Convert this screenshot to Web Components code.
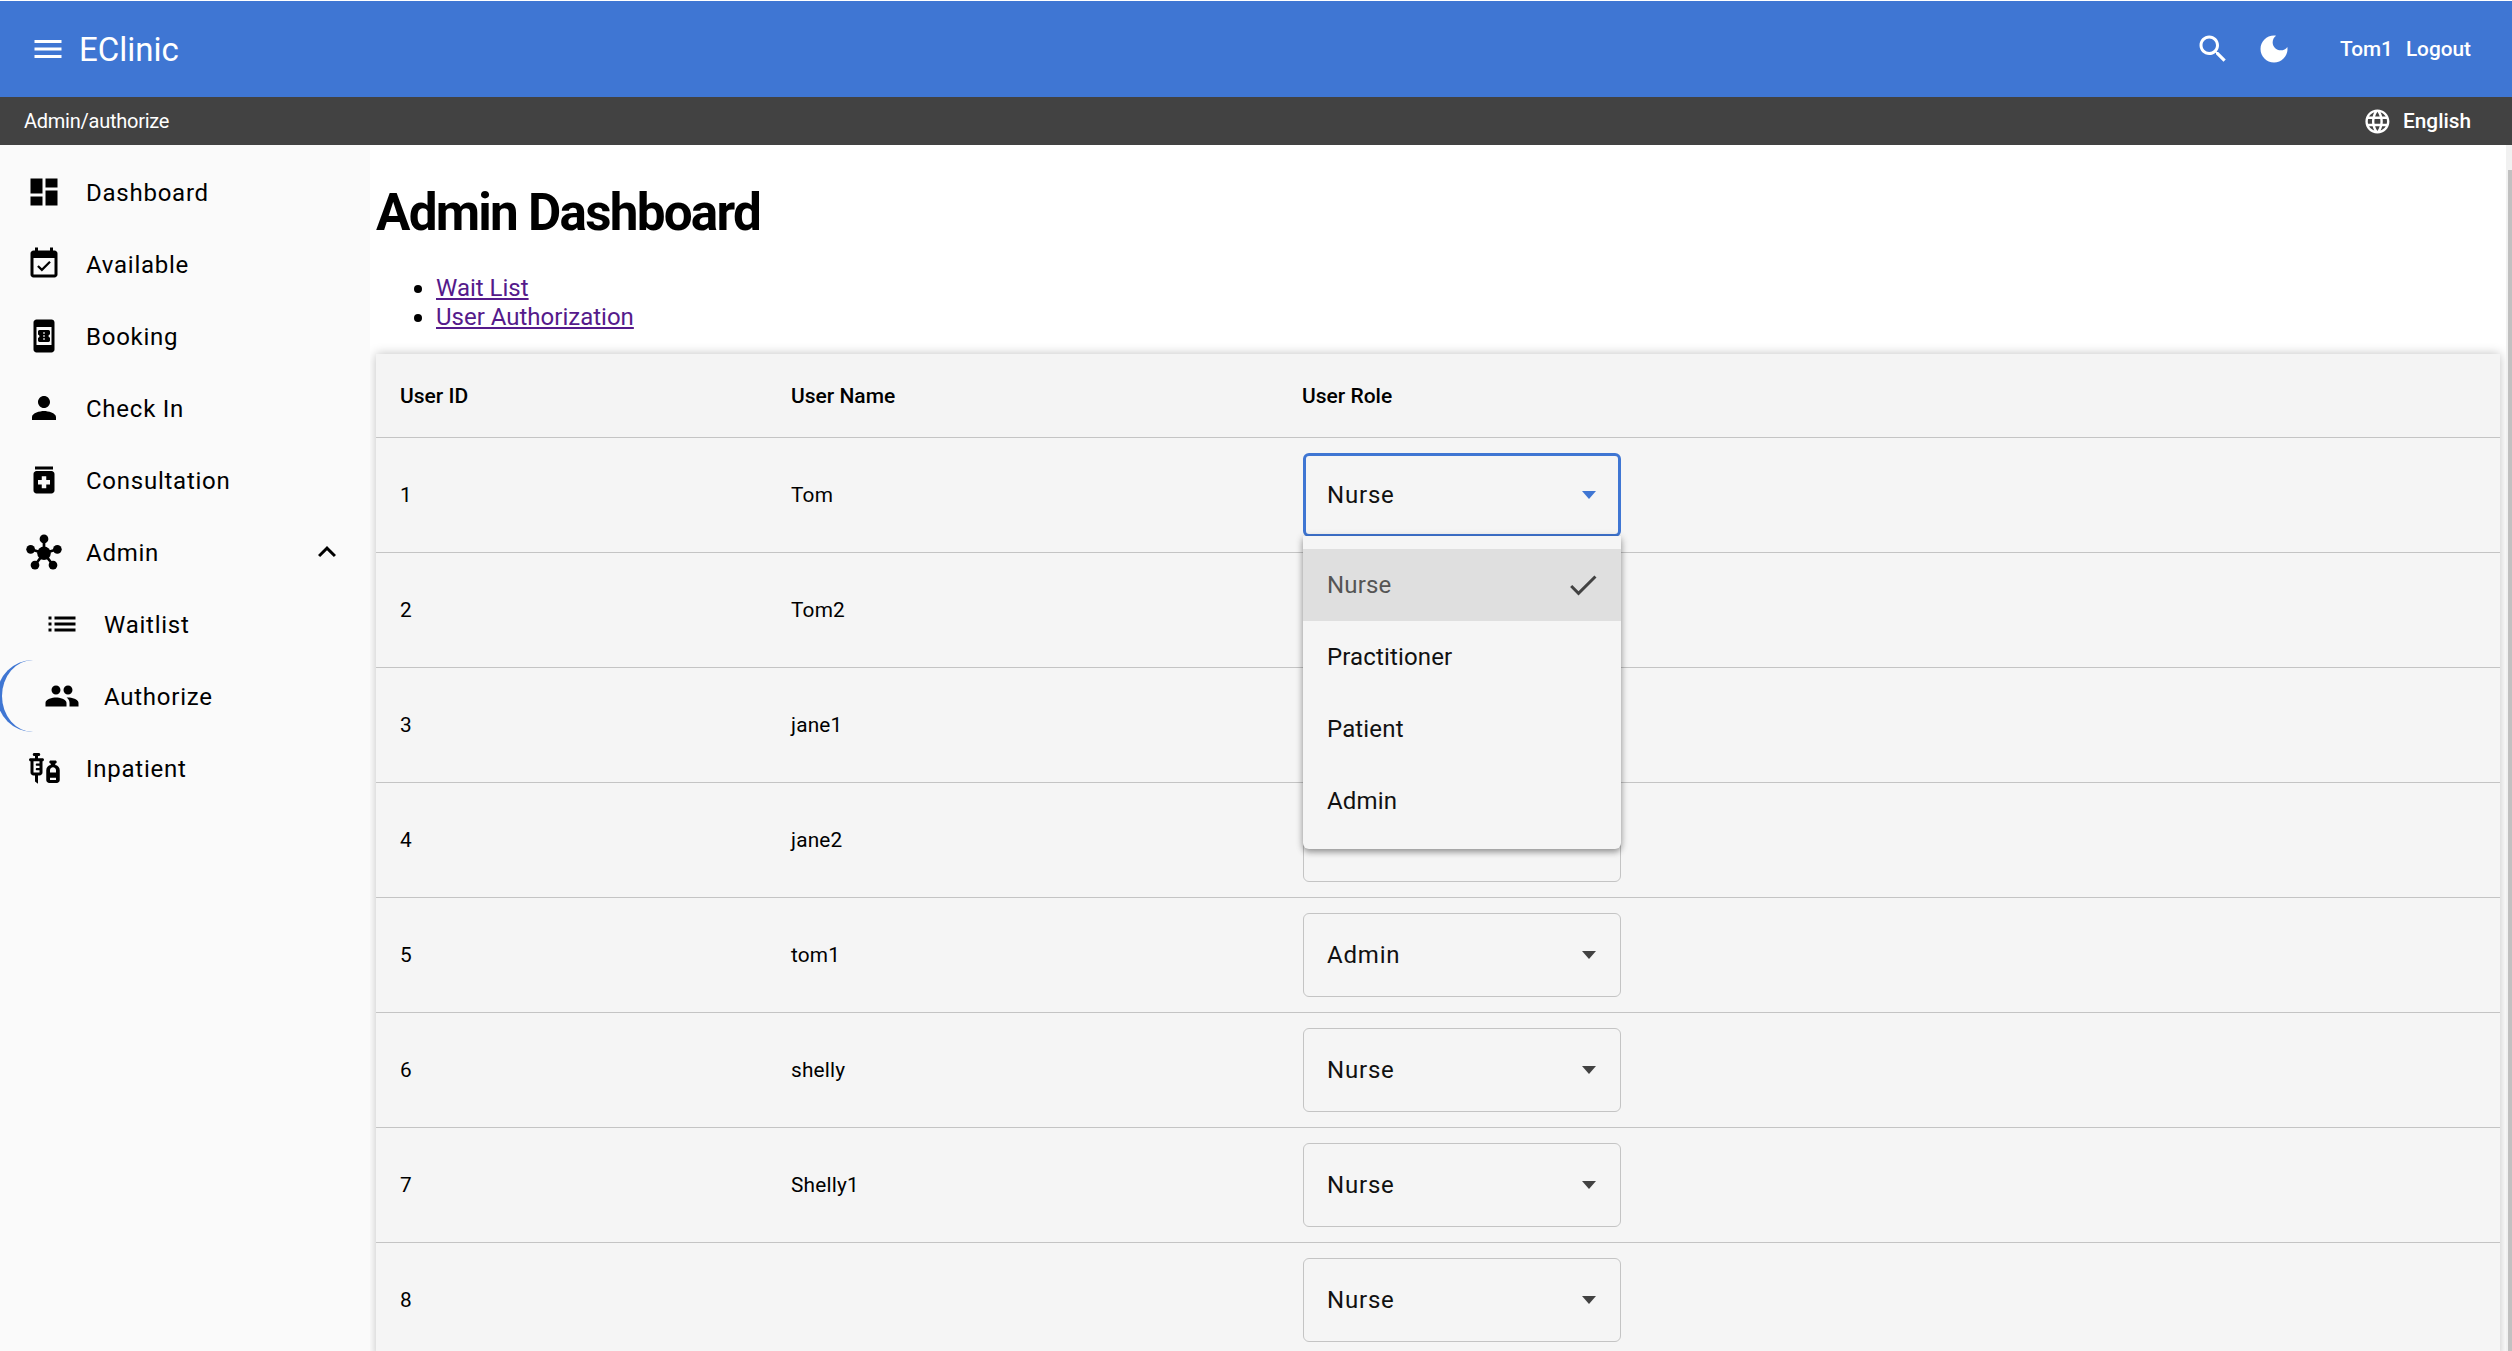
<!DOCTYPE html>
<html lang="en"><head><meta charset="utf-8"><title>EClinic</title>
<style>
html,body{margin:0;height:100%;overflow:hidden;background:#fff;font-family:Roboto,"Liberation Sans",sans-serif}
</style></head><body>
<app-shell>
  <app-topbar slot="top"></app-topbar>
  <app-subbar slot="top"></app-subbar>
  <app-sidebar slot="side">
    <nav-item icon="dashboard">Dashboard</nav-item>
    <nav-item icon="event">Available</nav-item>
    <nav-item icon="book">Booking</nav-item>
    <nav-item icon="person">Check In</nav-item>
    <nav-item icon="medication">Consultation</nav-item>
    <nav-item icon="hub" expanded>Admin</nav-item>
    <nav-item icon="list" sub>Waitlist</nav-item>
    <nav-item icon="people" sub active>Authorize</nav-item>
    <nav-item icon="vaccines">Inpatient</nav-item>
  </app-sidebar>
  <admin-page slot="main">
    <user-table>
      <user-row uid="1" name="Tom" role="Nurse" open></user-row>
      <user-row uid="2" name="Tom2"></user-row>
      <user-row uid="3" name="jane1"></user-row>
      <user-row uid="4" name="jane2"></user-row>
      <user-row uid="5" name="tom1" role="Admin"></user-row>
      <user-row uid="6" name="shelly" role="Nurse"></user-row>
      <user-row uid="7" name="Shelly1" role="Nurse"></user-row>
      <user-row uid="8" name="" role="Nurse"></user-row>
    </user-table>
  </admin-page>
</app-shell>
<script>
const ICONS={
menu:'<path d="M3 18h18v-2H3v2zm0-5h18v-2H3v2zm0-7v2h18V6H3z"/>',
dashboard:'<path d="M3 13h8V3H3v10zm0 8h8v-6H3v6zm10 0h8V11h-8v10zm0-18v6h8V3h-8z"/>',
event:'<path d="M16.53 11.06L15.47 10l-4.88 4.88-2.12-2.12-1.06 1.06L10.59 17l5.94-5.94zM19 3h-1V1h-2v2H8V1H6v2H5c-1.11 0-1.99.9-1.99 2L3 19c0 1.1.89 2 2 2h14c1.1 0 2-.9 2-2V5c0-1.1-.9-2-2-2zm0 16H5V8h14v11z"/>',
book:'<path d="M17 1.01L7 1c-1.1 0-2 .9-2 2v18c0 1.1.9 2 2 2h10c1.1 0 2-.9 2-2V3c0-1.1-.9-1.99-2-1.99zM17 18H7V6h10v12zm-1-7V9.14C16 8.51 15.55 8 15 8H9c-.55 0-1 .51-1 1.14v1.96c.55 0 1 .45 1 1s-.45 1-1 1v1.76c0 .63.45 1.14 1 1.14h6c.55 0 1-.51 1-1.14V13c-.55 0-1-.45-1-1s.45-1 1-1zm-3.5 3.5h-1v-1h1v1zm0-2h-1v-1h1v1zm0-2h-1v-1h1v1z"/>',
person:'<path d="M12 12c2.21 0 4-1.79 4-4s-1.79-4-4-4-4 1.79-4 4 1.79 4 4 4zm0 2c-2.67 0-8 1.34-8 4v2h16v-2c0-2.66-5.33-4-8-4z"/>',
medication:'<path d="M6 3h12v2H6zm11 3H7c-1.1 0-2 .9-2 2v11c0 1.1.9 2 2 2h10c1.1 0 2-.9 2-2V8c0-1.1-.9-2-2-2zm-1 9h-2.5v2.5h-3V15H8v-3h2.5V9.5h3V12H16v3z"/>',
hub:'<g stroke="currentColor" stroke-width="1.8"><path d="M12 12.8L12 3.3M12 12.8L3.1 10.2M12 12.8L20.9 10.2M12 12.8L6 20.7M12 12.8L18 20.7"/></g><circle cx="12" cy="12.8" r="4.5"/><circle cx="12" cy="3.3" r="2.9"/><circle cx="3.1" cy="10.2" r="2.9"/><circle cx="20.9" cy="10.2" r="2.9"/><circle cx="6" cy="20.7" r="2.9"/><circle cx="18" cy="20.7" r="2.9"/>',
list:'<path d="M3 13h2v-2H3v2zm0 4h2v-2H3v2zm0-8h2V7H3v2zm4 4h14v-2H7v2zm0 4h14v-2H7v2zM7 7v2h14V7H7z"/>',
people:'<path d="M16 11c1.66 0 2.99-1.34 2.99-3S17.66 5 16 5c-1.66 0-3 1.34-3 3s1.34 3 3 3zm-8 0c1.66 0 2.99-1.34 2.99-3S9.66 5 8 5C6.34 5 5 6.34 5 8s1.34 3 3 3zm0 2c-2.33 0-7 1.17-7 3.5V19h14v-2.5c0-2.33-4.67-3.5-7-3.5zm8 0c-.29 0-.62.02-.97.05 1.16.84 1.97 1.97 1.97 3.45V19h6v-2.5c0-2.33-4.67-3.5-7-3.5z"/>',
vaccines:'<path fill-rule="evenodd" d="M11 5.5H8V4h.5c.55 0 1-.45 1-1s-.45-1-1-1h-3c-.55 0-1 .45-1 1s.45 1 1 1H6v1.5H3c-.55 0-1 .45-1 1s.45 1 1 1V15c0 1.1.9 2 2 2h1v4l2 1.5V17h1c1.1 0 2-.9 2-2V7.5c.55 0 1-.45 1-1s-.45-1-1-1zM9 9H7.25c-.41 0-.75.34-.75.75s.34.75.75.75H9V12H7.25c-.41 0-.75.34-.75.75s.34.75.75.75H9V15H5V7.5h4V9zM19.5 10.05V9c.55 0 1-.45 1-1s-.45-1-1-1h-3c-.55 0-1 .45-1 1s.45 1 1 1v1.05c-1.69.24-3 1.69-3 3.45V20c0 1.1.9 2 2 2h5c1.1 0 2-.9 2-2v-6.5c0-1.76-1.31-3.21-3-3.45zM18 11.5c1.1 0 2 .9 2 2V15h-4v-1.5c0-1.1.9-2 2-2zM16 20v-1.5h4V20h-4z"/>',
less:'<path d="M12 8l-6 6 1.41 1.41L12 10.83l4.59 4.58L18 14z"/>',
search:'<path d="M15.5 14h-.79l-.28-.27C15.41 12.59 16 11.11 16 9.5 16 5.91 13.09 3 9.5 3S3 5.91 3 9.5 5.91 16 9.5 16c1.61 0 3.09-.59 4.23-1.57l.27.28v.79l5 4.99L20.49 19l-4.99-5zm-6 0C7.01 14 5 11.99 5 9.5S7.01 5 9.5 5 14 7.01 14 9.5 11.99 14 9.5 14z"/>',
moon:'<path d="M12 3c-4.97 0-9 4.03-9 9s4.03 9 9 9 9-4.03 9-9c0-.46-.04-.92-.1-1.36-.98 1.37-2.58 2.26-4.4 2.26-2.98 0-5.4-2.42-5.4-5.4 0-1.81.89-3.42 2.26-4.4-.44-.06-.9-.1-1.36-.1z"/>',
language:'<path d="M11.99 2C6.47 2 2 6.48 2 12s4.47 10 9.99 10C17.52 22 22 17.52 22 12S17.52 2 11.99 2zm6.93 6h-2.95c-.32-1.25-.78-2.45-1.38-3.56 1.84.63 3.37 1.91 4.33 3.56zM12 4.04c.83 1.2 1.48 2.53 1.91 3.96h-3.82c.43-1.43 1.08-2.76 1.91-3.96zM4.26 14C4.1 13.36 4 12.69 4 12s.1-1.36.26-2h3.38c-.08.66-.14 1.32-.14 2 0 .68.06 1.34.14 2H4.26zm.82 2h2.95c.32 1.25.78 2.45 1.38 3.56-1.84-.63-3.37-1.9-4.33-3.56zm2.95-8H5.08c.96-1.66 2.49-2.93 4.33-3.56C8.81 5.55 8.35 6.75 8.03 8zM12 19.96c-.83-1.2-1.48-2.53-1.91-3.96h3.82c-.43 1.43-1.08 2.76-1.91 3.96zM14.34 14H9.66c-.09-.66-.16-1.32-.16-2 0-.68.07-1.35.16-2h4.68c.09.65.16 1.32.16 2 0 .68-.07 1.34-.16 2zm.25 5.56c.6-1.11 1.06-2.31 1.38-3.56h2.95c-.96 1.65-2.49 2.93-4.33 3.56zM16.36 14c.08-.66.14-1.32.14-2 0-.68-.06-1.34-.14-2h3.38c.16.64.26 1.31.26 2s-.1 1.36-.26 2h-3.38z"/>',
check:'<path d="M9 16.17L4.83 12l-1.42 1.41L9 19 21 7l-1.41-1.41z"/>'
};
function shadow(el,html){const r=el.attachShadow({mode:'open'});r.innerHTML=html;return r;}
customElements.define('app-icon',class extends HTMLElement{
  connectedCallback(){
    if(this.shadowRoot)return;
    shadow(this,`<style>:host{display:inline-flex;width:var(--s,36px);height:var(--s,36px);flex:none}svg{width:100%;height:100%;fill:currentColor;display:block}</style><svg viewBox="0 0 24 24" aria-hidden="true">${ICONS[this.getAttribute('name')]||''}</svg>`);
  }
});
customElements.define('app-shell',class extends HTMLElement{
  constructor(){super();shadow(this,`<style>
  :host{display:flex;flex-direction:column;height:100vh;padding-top:1px;box-sizing:border-box;overflow:hidden;background:#fff}
  .body{flex:1;display:flex;min-height:0}
  .side{width:370px;flex:none;background:#fafafa;position:relative;z-index:2}
  .main{flex:1;min-width:0;overflow:hidden;background:#fff}
  .track{width:6px;flex:none;background:#f1f1f1;padding-top:25px;box-sizing:border-box;display:flex;justify-content:flex-end}
  .thumb{width:4px;height:100%;background:#c1c1c1}
  </style><slot name="top"></slot><div class="body"><div class="side"><slot name="side"></slot></div><div class="main"><slot name="main"></slot></div><div class="track"><div class="thumb"></div></div></div>`);}
});
customElements.define('app-topbar',class extends HTMLElement{
  constructor(){super();shadow(this,`<style>
  :host{display:flex;align-items:center;height:96px;background:#3f76d3;color:#fff;padding:0 41px 0 30px}
  .brand{font-size:33px;margin-left:13px;line-height:1}
  .right{margin-left:auto;display:flex;align-items:center}
  .moon{margin-left:25px}
  .user{margin-left:48px;font-size:20.8px;font-weight:500;display:flex;gap:13px}
  </style><app-icon name="menu"></app-icon><span class="brand">EClinic</span><div class="right"><app-icon name="search"></app-icon><app-icon class="moon" name="moon"></app-icon><div class="user"><span>Tom1</span><span>Logout</span></div></div>`);}
});
customElements.define('app-subbar',class extends HTMLElement{
  constructor(){super();shadow(this,`<style>
  :host{display:flex;align-items:center;height:48px;background:#424242;color:#fff;padding:0 41px 0 24px;font-size:20px;letter-spacing:-.25px}
  .lang{margin-left:auto;display:flex;align-items:center;gap:11px;font-size:20.8px;font-weight:500;letter-spacing:0;--s:28.8px}
  </style><span>Admin/authorize</span><div class="lang"><app-icon name="language"></app-icon><span>English</span></div>`);}
});
customElements.define('app-sidebar',class extends HTMLElement{
  constructor(){super();shadow(this,`<style>:host{display:block;padding-top:11px;color:#000}</style><slot></slot>`);}
});
customElements.define('nav-item',class extends HTMLElement{
  constructor(){super();
    const sub=this.hasAttribute('sub'),exp=this.hasAttribute('expanded'),act=this.hasAttribute('active');
    shadow(this,`<style>
    :host{display:flex;align-items:center;height:72px;box-sizing:border-box;padding-left:${sub?44:26}px;padding-right:25px;font-size:24px;letter-spacing:.75px;position:relative}
    .label{margin-left:24px;padding-top:1px}
    .arrow{margin-left:auto}
    .arc{position:absolute;left:-3px;top:0;width:39px;height:72px;box-sizing:border-box;border-left:5px solid #3f76d3;border-radius:36px 0 0 36px}
    </style>${act?'<span class="arc"></span>':''}<app-icon name="${this.getAttribute('icon')}"></app-icon><span class="label"><slot></slot></span>${exp?'<app-icon class="arrow" name="less"></app-icon>':''}`);
  }
});
customElements.define('admin-page',class extends HTMLElement{
  constructor(){super();shadow(this,`<style>
  :host{display:block;padding:0 6px 0 6px}
  h1{font-size:51.2px;font-weight:700;letter-spacing:-1.75px;margin:38px 0 31px;line-height:60px;color:#000}
  ul{margin:0 0 22px;padding-left:60px;font-size:24px;line-height:29px;list-style:none}
  li{position:relative}
  li::before{content:"";position:absolute;left:-22px;top:11px;width:8px;height:8px;border-radius:50%;background:#000}
  a{color:#551a8b}
  </style><h1>Admin Dashboard</h1><ul><li><a href="#wait">Wait List</a></li><li><a href="#auth">User Authorization</a></li></ul><slot></slot>`);}
});
const GRID='display:grid;grid-template-columns:391px 511px 1fr;align-items:center;';
customElements.define('user-table',class extends HTMLElement{
  constructor(){super();shadow(this,`<style>
  :host{display:block;background:#f5f5f5;box-shadow:0 0 10px rgba(0,0,0,.25);color:#000}
  .head{${GRID}height:83px;font-size:21px;font-weight:500;background:#f4f4f4;border-bottom:1px solid #c4c4c4;padding-left:24px}
  </style><div class="head"><span>User ID</span><span>User Name</span><span>User Role</span></div><slot></slot>`);}
});
customElements.define('user-row',class extends HTMLElement{
  constructor(){super();
    const a=n=>this.getAttribute(n)||'';
    shadow(this,`<style>
    :host{${GRID}height:115px;box-sizing:border-box;font-size:20.8px;letter-spacing:.2px;border-bottom:1px solid #c4c4c4;padding-left:24px}
    </style><span>${a('uid')}</span><span>${a('name')}</span><role-select ${this.hasAttribute('open')?'open':''} value="${a('role')}"></role-select>`);
  }
});
customElements.define('role-select',class extends HTMLElement{
  constructor(){super();
    const open=this.hasAttribute('open'),v=this.getAttribute('value')||'';
    shadow(this,`<style>
    :host{display:block;position:relative;width:318px;height:84px;margin-left:1px;font-size:24px;letter-spacing:0}
    .box{height:100%;box-sizing:border-box;border:${open?'3px solid #3f76d3':'1px solid #c4c4c4'};border-radius:6px;display:flex;align-items:center;padding:0 ${open?22:24}px 0 ${open?21:23}px;letter-spacing:.8px;color:#111}
    .arrow{margin-left:auto;width:0;height:0;border-left:7.5px solid transparent;border-right:7.5px solid transparent;border-top:8px solid ${open?'#3f76d3':'#424242'}}
    .menu{position:absolute;left:0;right:0;top:83px;z-index:5;background:#f5f5f5;border-radius:0 0 6px 6px;padding:13px 0 12px;box-shadow:0 3px 6px rgba(0,0,0,.35),0 1px 10px rgba(0,0,0,.12);letter-spacing:.15px}
    .opt{height:72px;display:flex;align-items:center;padding:0 20px 0 24px;color:#111}
    .opt.sel{background:#dfdfdf;color:#555}
    .opt app-icon{margin-left:auto;color:#424242}
    </style><div class="box"><span>${v}</span><span class="arrow"></span></div>${open?`<div class="menu"><div class="opt sel"><span>Nurse</span><app-icon name="check"></app-icon></div><div class="opt"><span>Practitioner</span></div><div class="opt"><span>Patient</span></div><div class="opt"><span>Admin</span></div></div>`:''}`);
  }
});
</script>
</body></html>
